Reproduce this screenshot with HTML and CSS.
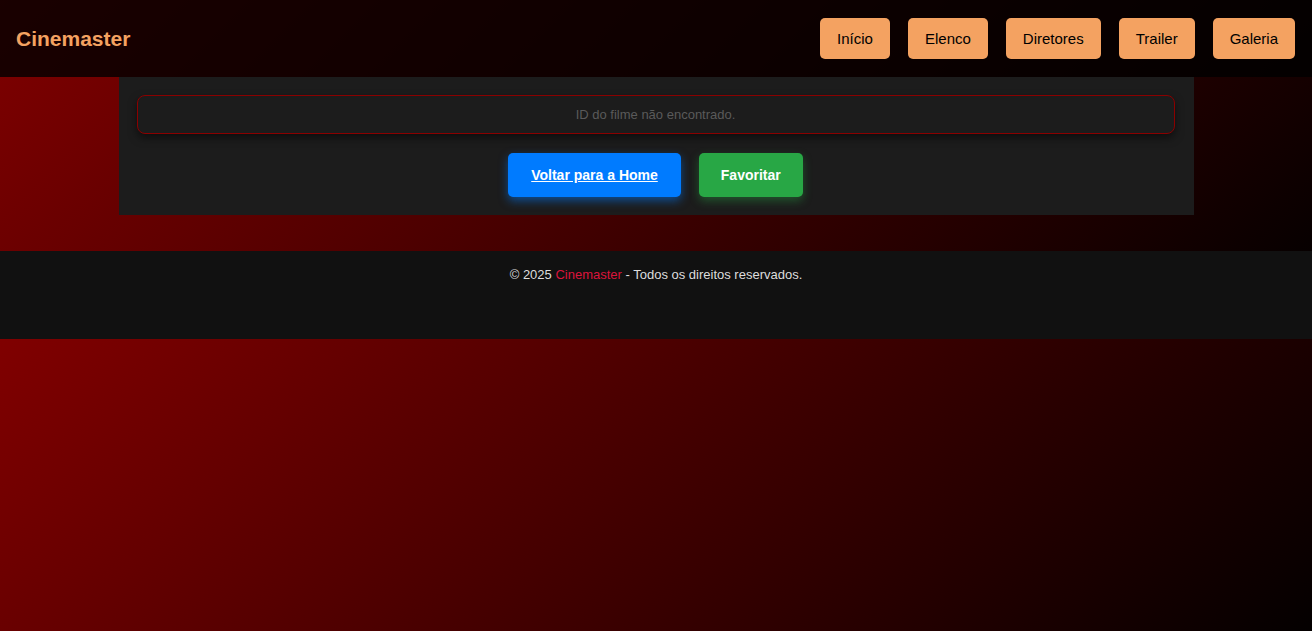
FILE: index.html
```html
<!DOCTYPE html>
<html lang="pt-BR">
<head>
<meta charset="utf-8">
<title>Cinemaster</title>
<link rel="stylesheet" href="styles.css">
</head>
<body>
<header class="site-header">
  <div class="logo">Cinemaster</div>
  <nav class="nav">
    <a class="nav-btn" href="#">Início</a>
    <a class="nav-btn" href="#">Elenco</a>
    <a class="nav-btn" href="#">Diretores</a>
    <a class="nav-btn" href="#">Trailer</a>
    <a class="nav-btn" href="#">Galeria</a>
  </nav>
</header>
<main class="content">
  <div class="error-box">ID do filme não encontrado.</div>
  <div class="actions">
    <a class="btn btn-home" href="#">Voltar para a Home</a>
    <button class="btn btn-fav" type="button">Favoritar</button>
  </div>
</main>
<footer class="site-footer">
  <p>© 2025 <span class="brand">Cinemaster</span> - Todos os direitos reservados.</p>
</footer>
</body>
</html>
```

FILE: styles.css
```css
* { box-sizing: border-box; }

body {
  margin: 0;
  font-family: "Liberation Sans", Arial, sans-serif;
  background: linear-gradient(135deg, #800000, #000000);
  color: #fff;
}

.site-header {
  display: flex;
  align-items: center;
  justify-content: space-between;
  padding: 18px 17px 18px 16px;
  background: rgba(0, 0, 0, 0.8);
}

.logo {
  font-size: 21px;
  font-weight: bold;
  color: #f4a261;
}

.nav {
  display: flex;
  gap: 18px;
}

.nav-btn {
  display: block;
  padding: 12px 17px;
  font-size: 15px;
  line-height: 17px;
  color: #000;
  background: #f4a261;
  border-radius: 5px;
  text-decoration: none;
}

.content {
  width: 1075px;
  margin: 0 auto;
  padding: 18px 19px 18px 18px;
  background: #1c1c1c;
  display: flex;
  flex-direction: column;
  gap: 19px;
}

.error-box {
  height: 39px;
  display: flex;
  align-items: center;
  justify-content: center;
  font-size: 13px;
  color: #5a5a5a;
  background: #1c1c1c;
  border: 1px solid #8b0000;
  border-radius: 8px;
  box-shadow: 0 4px 8px rgba(0, 0, 0, 0.5);
}

.actions {
  display: flex;
  justify-content: center;
  gap: 18px;
}

.btn {
  display: block;
  padding: 14px 23px;
  font-family: inherit;
  font-size: 14px;
  line-height: 16px;
  font-weight: bold;
  color: #fff;
  border: none;
  border-radius: 5px;
}

.btn-home {
  background: #007bff;
  text-decoration: underline;
  box-shadow: 0 4px 10px rgba(0, 123, 255, 0.5);
}

.btn-fav {
  background: #28a745;
  width: 104px;
  padding-left: 0;
  padding-right: 0;
  text-align: center;
  box-shadow: 0 4px 10px rgba(40, 167, 69, 0.4);
}

.site-footer {
  margin-top: 36px;
  height: 88px;
  padding-top: 16px;
  background: #111;
  text-align: center;
}

.site-footer p {
  margin: 0;
  font-size: 13px;
  line-height: 15px;
  color: #ddd;
}

.brand {
  color: #dc143c;
}
```
